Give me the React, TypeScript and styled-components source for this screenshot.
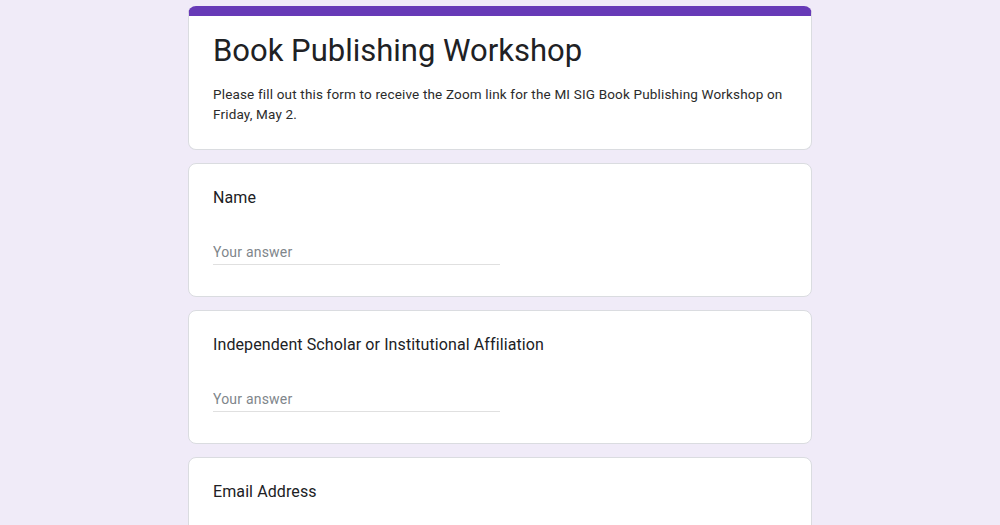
import React from 'react'
import styled, { createGlobalStyle } from 'styled-components'

const GlobalStyle = createGlobalStyle`
	html, body {
		margin: 0;
		padding: 0;
		background: #f0ebf8;
		font-family: Roboto, 'Liberation Sans', Arial, sans-serif;
		color: #202124;
	}
`

const questions = ['Name', 'Independent Scholar or Institutional Affiliation', 'Email Address']

const App = () => {
	return (
		<Page>
			<GlobalStyle />
			<Column>
				<HeaderCard>
					<Title>Book Publishing Workshop</Title>
					<Description>
						Please fill out this form to receive the Zoom link for the MI SIG Book Publishing Workshop on
						Friday, May 2.
					</Description>
				</HeaderCard>
				{questions.map((q) => (
					<QuestionCard key={q}>
						<QuestionTitle>{q}</QuestionTitle>
						<AnswerInput placeholder='Your answer' />
					</QuestionCard>
				))}
			</Column>
		</Page>
	)
}

const Page = styled.div`
	min-height: 100vh;
	display: flex;
	justify-content: center;
	padding-top: 6px;
	box-sizing: border-box;
`

const Column = styled.div`
	width: 624px;
	display: flex;
	flex-direction: column;
	gap: 13px;
`

const Card = styled.div`
	background: #fff;
	border: 1px solid #dadce0;
	border-radius: 8px;
	padding: 24px;
	box-sizing: border-box;
`

const HeaderCard = styled(Card)`
	border-top: 10px solid #673ab7;
	padding-top: 15px;
	padding-bottom: 25px;
`

const Title = styled.h1`
	margin: 0 0 13px;
	font-size: 31px;
	font-weight: 400;
	line-height: 40px;
	color: #202124;
`

const Description = styled.p`
	margin: 0;
	font-size: 13.5px;
	line-height: 20px;
	color: #2b2b2b;
	letter-spacing: 0.17px;
`

const QuestionCard = styled(Card)`
	padding-top: 22px;
	padding-bottom: 31px;
`

const QuestionTitle = styled.div`
	font-size: 16px;
	line-height: 24px;
	letter-spacing: 0.1px;
	color: #202124;
`

const AnswerInput = styled.input`
	display: block;
	box-sizing: border-box;
	margin-top: 26px;
	width: 50%;
	height: 29px;
	padding: 4px 0 0;
	border: none;
	border-bottom: 1px solid #e0e0e0;
	outline: none;
	font-family: Roboto, 'Liberation Sans', Arial, sans-serif;
	font-size: 14px;
	color: #202124;
	background: transparent;

	&::placeholder {
		color: #80868b;
		letter-spacing: 0.2px;
	}
`

export default App
